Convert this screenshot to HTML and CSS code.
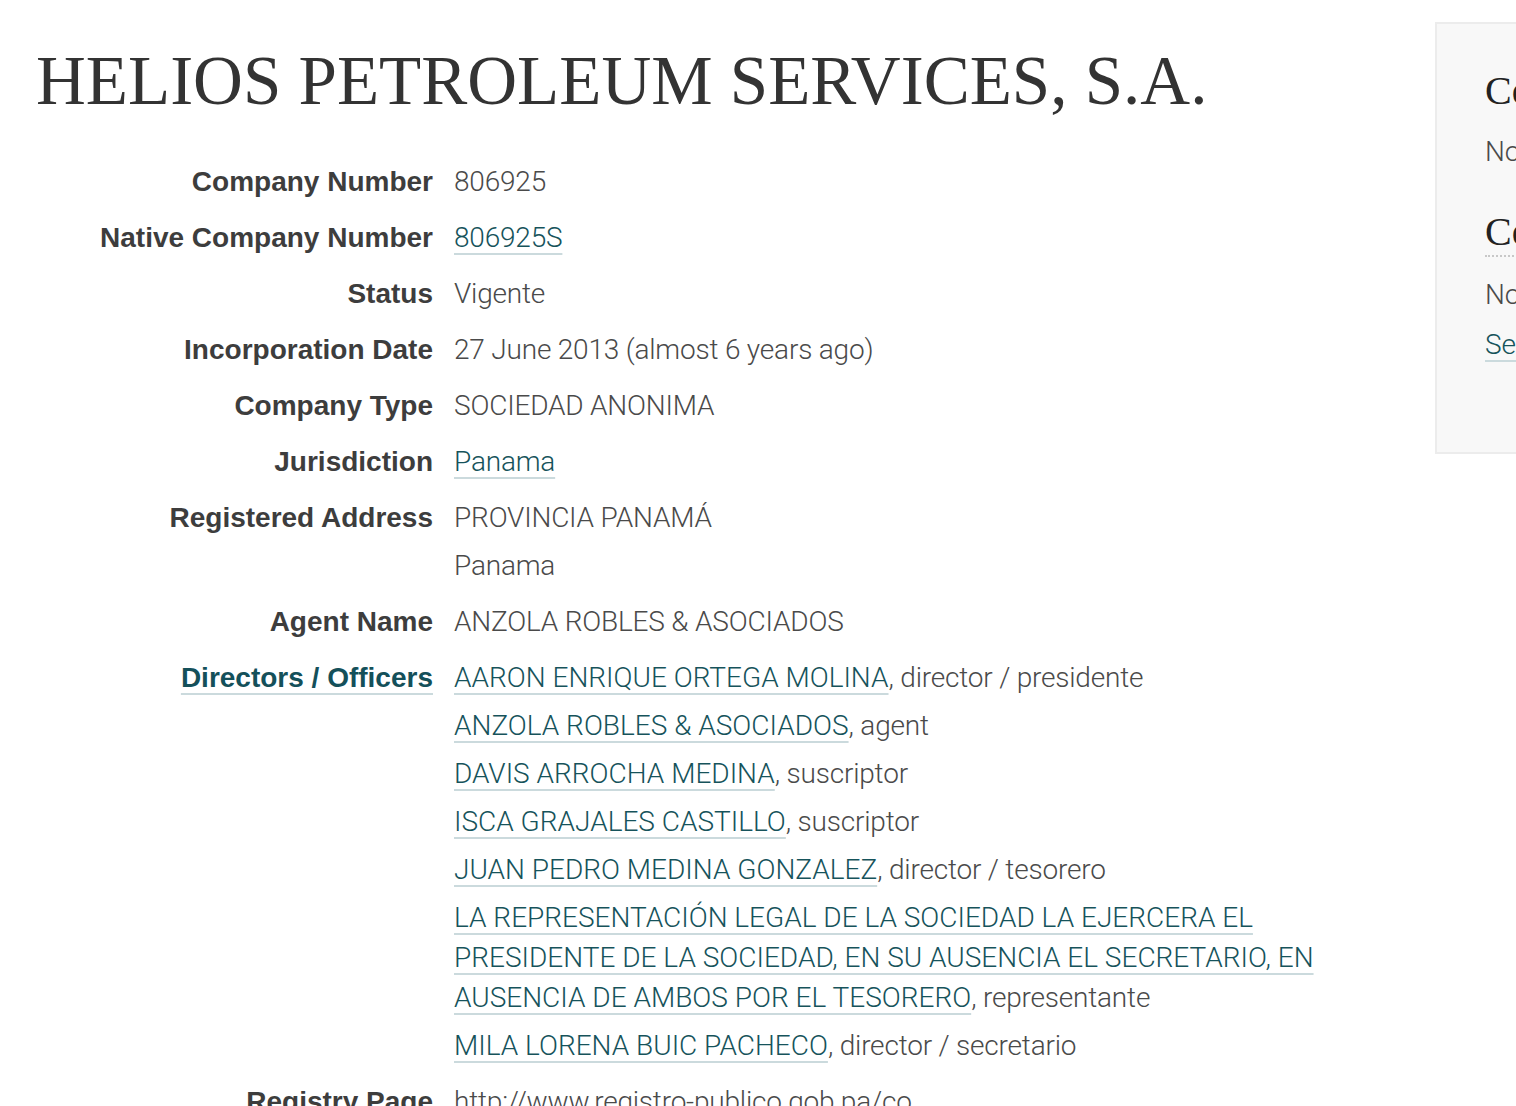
FILE: index.html
```html
<!DOCTYPE html>
<html lang="en">
<head>
<meta charset="utf-8">
<title>HELIOS PETROLEUM SERVICES, S.A.</title>
<link rel="stylesheet" href="styles.css">
</head>
<body>
<div class="page">
  <main class="main">
    <h1 class="title">HELIOS PETROLEUM SERVICES, S.A.</h1>
    <dl class="attrs">
      <dt>Company Number</dt>
      <dd>806925</dd>
      <dt>Native Company Number</dt>
      <dd><a class="link" href="#">806925S</a></dd>
      <dt>Status</dt>
      <dd>Vigente</dd>
      <dt>Incorporation Date</dt>
      <dd>27 June 2013 (almost 6 years ago)</dd>
      <dt>Company Type</dt>
      <dd>SOCIEDAD ANONIMA</dd>
      <dt>Jurisdiction</dt>
      <dd><a class="link" href="#">Panama</a></dd>
      <dt>Registered Address</dt>
      <dd>
        <div class="addr-line">PROVINCIA PANAMÁ</div>
        <div class="addr-line">Panama</div>
      </dd>
      <dt>Agent Name</dt>
      <dd>ANZOLA ROBLES &amp; ASOCIADOS</dd>
      <dt><a class="link label-link" href="#">Directors / Officers</a></dt>
      <dd>
        <ul class="officers">
          <li><a class="link" href="#">AARON ENRIQUE ORTEGA MOLINA</a>, director / presidente</li>
          <li><a class="link" href="#">ANZOLA ROBLES &amp; ASOCIADOS</a>, agent</li>
          <li><a class="link" href="#">DAVIS ARROCHA MEDINA</a>, suscriptor</li>
          <li><a class="link" href="#">ISCA GRAJALES CASTILLO</a>, suscriptor</li>
          <li><a class="link" href="#">JUAN PEDRO MEDINA GONZALEZ</a>, director / tesorero</li>
          <li><a class="link" href="#">LA REPRESENTACIÓN LEGAL DE LA SOCIEDAD LA EJERCERA EL PRESIDENTE DE LA SOCIEDAD, EN SU AUSENCIA EL SECRETARIO, EN AUSENCIA DE AMBOS POR EL TESORERO</a>, representante</li>
          <li><a class="link" href="#">MILA LORENA BUIC PACHECO</a>, director / secretario</li>
        </ul>
      </dd>
      <dt>Registry Page</dt>
      <dd>http://www.registro-publico.gob.pa/co</dd>
    </dl>
  </main>
  <aside class="sidebar">
    <h3 class="side-title">Corporate Grouping</h3>
    <p class="side-text first">None known. Add one now?</p>
    <h3 class="side-title second"><span class="dotted">Company network</span></h3>
    <p class="side-text near">None known.</p>
    <p class="side-text tight"><a class="link" href="#">See all corporate networks</a></p>
  </aside>
</div>
</body>
</html>
```

FILE: styles.css
```css
html, body {
  margin: 0;
  padding: 0;
  overflow: hidden;
  background: #ffffff;
}

body {
  font-family: "Liberation Sans", Arial, sans-serif;
  color: #333333;
}

.page {
  display: flex;
  align-items: flex-start;
  width: 2000px;
}

.main {
  flex: 0 0 1318px;
  padding-left: 36px;
  margin-right: 81px;
}

.title {
  margin: 41px 0 0;
  font-family: "Liberation Serif", "Times New Roman", serif;
  font-weight: normal;
  font-size: 69px;
  line-height: 80px;
  color: #333333;
  white-space: nowrap;
}

.attrs {
  display: grid;
  grid-template-columns: 397px 1fr;
  column-gap: 21px;
  row-gap: 16px;
  margin: 41px 0 0;
}

.attrs dt {
  text-align: right;
  font-family: "Liberation Sans", Arial, sans-serif;
  font-weight: bold;
  font-size: 28px;
  line-height: 40px;
  color: #3d3d3d;
}

.attrs dd {
  margin: 0;
  font-family: Roboto, "Liberation Sans", sans-serif;
  font-weight: 300;
  font-size: 28px;
  line-height: 40px;
  letter-spacing: -0.2px;
  color: #4a4a4a;
}

.link {
  color: #16535b;
  text-decoration: underline;
  text-decoration-color: #cbdadd;
  text-decoration-thickness: 2px;
  text-underline-offset: 6px;
}

.officers .link {
  letter-spacing: 0;
}

.label-link {
  color: #14505a;
}

.addr-line + .addr-line {
  margin-top: 8px;
}

.officers {
  list-style: none;
  margin: 0;
  padding: 0;
}

.officers li + li {
  margin-top: 8px;
}

.sidebar {
  flex: 0 0 auto;
  width: 420px;
  margin-top: 22px;
  border: 2px solid #ececec;
  background: #f8f8f8;
  padding: 43px 48px 87px;
}

.side-title {
  margin: 0;
  font-family: "Liberation Serif", "Times New Roman", serif;
  font-weight: normal;
  font-size: 40px;
  line-height: 48px;
  color: #222222;
  white-space: nowrap;
}

.side-title.second {
  margin-top: 36px;
}

.dotted {
  display: inline-block;
  border-bottom: 2px dotted #c8c8c8;
  line-height: 46px;
}

.side-text {
  margin: 0;
  font-family: Roboto, "Liberation Sans", sans-serif;
  font-weight: 300;
  font-size: 28px;
  line-height: 40px;
  letter-spacing: -0.2px;
  color: #4a4a4a;
  white-space: nowrap;
}

.side-text.first {
  margin-top: 17px;
}

.side-text.near {
  margin-top: 18px;
}

.side-text.tight {
  margin-top: 10px;
}
```
